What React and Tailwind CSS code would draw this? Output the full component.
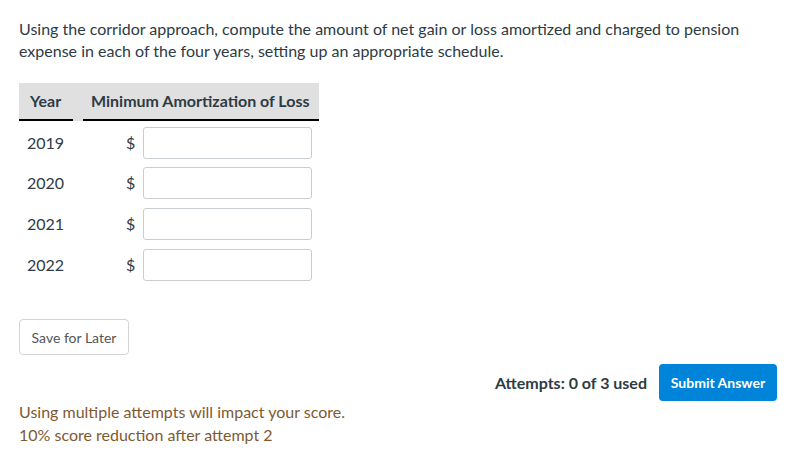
import React from 'react';

export default function App() {
  const years = ['2019', '2020', '2021', '2022'];

  return (
    <div className="w-[800px] h-[456px] bg-white text-[#2d3b45] font-['Lato','Liberation_Sans',sans-serif] relative overflow-hidden">
      <div className="pl-[19px] pr-4 pt-[18px]">
        {/* Question text */}
        <p className="text-[16px] leading-[22px] max-w-[740px]">
          Using the corridor approach, compute the amount of net gain or loss amortized and charged to pension
          expense in each of the four years, setting up an appropriate schedule.
        </p>

        {/* Schedule table */}
        <table className="mt-[21px] border-separate border-spacing-0 text-[16px]">
          <thead>
            <tr className="bg-[#e0e0e0]">
              <th className="h-[38px] w-[54px] pl-[11px] text-left font-bold align-middle border-b-[2px] border-black">
                Year
              </th>
              <th className="w-[10px] p-0"></th>
              <th className="w-[236px] pl-[8px] text-left font-bold align-middle border-b-[2px] border-black whitespace-nowrap">
                Minimum Amortization of Loss
              </th>
            </tr>
          </thead>
          <tbody>
            {years.map((y, i) => (
              <tr key={y}>
                <td className={`h-[41px] pl-[8px] align-middle ${i === 0 ? 'pt-[3px]' : ''}`}>{y}</td>
                <td></td>
                <td className={`align-middle ${i === 0 ? 'pt-[3px]' : ''}`}>
                  <div className="flex items-center">
                    <span className="ml-[43px] w-[17px]">$</span>
                    <div className="w-[169px] h-[32px] border border-[#c7cdd1] rounded-[3px] bg-white"></div>
                  </div>
                </td>
              </tr>
            ))}
          </tbody>
        </table>

        {/* Save for later */}
        <button className="mt-[34px] h-[36px] w-[110px] border border-[#d1d5d8] rounded-[4px] bg-white text-[14px] text-[#555] flex items-center justify-center">
          Save for Later
        </button>
      </div>

      {/* Footer */}
      <div className="absolute left-[19px] right-[23px] top-[364px] flex justify-between">
        <div className="pt-[36px] text-[16px] leading-[23px] text-[#7e5a32]">
          <p>Using multiple attempts will impact your score.</p>
          <p>10% score reduction after attempt 2</p>
        </div>
        <div className="flex items-start gap-[12px]">
          <span className="text-[16px] font-bold mt-[7px]">Attempts: 0 of 3 used</span>
          <button className="h-[37px] w-[118px] rounded-[4px] bg-[#0084d9] text-white text-[14px] font-bold">
            Submit Answer
          </button>
        </div>
      </div>
    </div>
  );
}
